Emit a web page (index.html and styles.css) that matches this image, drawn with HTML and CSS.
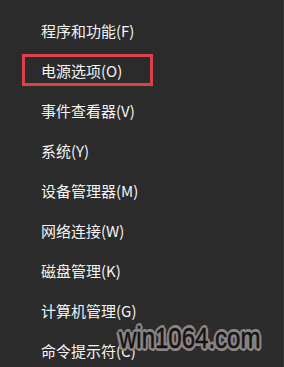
FILE: index.html
```html
<!DOCTYPE html>
<html lang="zh-CN">
<head>
<meta charset="utf-8">
<link rel="stylesheet" href="styles.css">
</head>
<body>
<div class="screen">
  <ul class="menu">
    <li class="item">程序和功能(F)</li>
    <li class="item selected"><span class="box">电源选项(O)</span></li>
    <li class="item">事件查看器(V)</li>
    <li class="item">系统(Y)</li>
    <li class="item">设备管理器(M)</li>
    <li class="item">网络连接(W)</li>
    <li class="item">磁盘管理(K)</li>
    <li class="item">计算机管理(G)</li>
    <li class="item">命令提示符(C)</li>
  </ul>
  <div class="watermark">win1064.com</div>
</div>
</body>
</html>
```
FILE: styles.css
```css
html, body {
  margin: 0;
  padding: 0;
  background: #2b2b2b;
}
.screen {
  position: relative;
  width: 284px;
  height: 367px;
  overflow: hidden;
  background: #2b2b2b;
  border-right: 1px solid #3a3a3a;
  box-sizing: border-box;
}
.menu {
  list-style: none;
  margin: 0;
  padding: 10px 0 0 0;
}
.item {
  height: 40px;
  display: flex;
  align-items: center;
  padding-left: 41px;
  color: #f4f4f4;
  font-family: "Noto Sans CJK SC", "Noto Sans", sans-serif;
  font-size: 15px;
  line-height: 1;
}
.item.selected {
  padding-left: 22px;
}
.box {
  display: flex;
  align-items: center;
  box-sizing: border-box;
  width: 131px;
  height: 32px;
  padding-left: 16px;
  border: 3px solid #d8424b;
}
.watermark {
  position: absolute;
  left: 119px;
  top: 321px;
  font-family: "Liberation Sans", Arial, sans-serif;
  font-size: 30px;
  line-height: 34px;
  color: #141414;
  -webkit-text-stroke: 0.6px #141414;
  transform: scaleX(0.8);
  transform-origin: left top;
  text-shadow:
    2px 0 0 #8c8484, -2px 0 0 #8c8484, 0 2px 0 #8c8484, 0 -2px 0 #8c8484,
    2px 2px 0 #8c8484, -2px -2px 0 #8c8484, 2px -2px 0 #8c8484, -2px 2px 0 #8c8484,
    3px 0 0 #8c8484, -3px 0 0 #8c8484, 0 3px 0 #8c8484, 0 -3px 0 #8c8484,
    3px 1px 0 #8c8484, -3px 1px 0 #8c8484, 1px 3px 0 #8c8484, 1px -3px 0 #8c8484;
}
```
